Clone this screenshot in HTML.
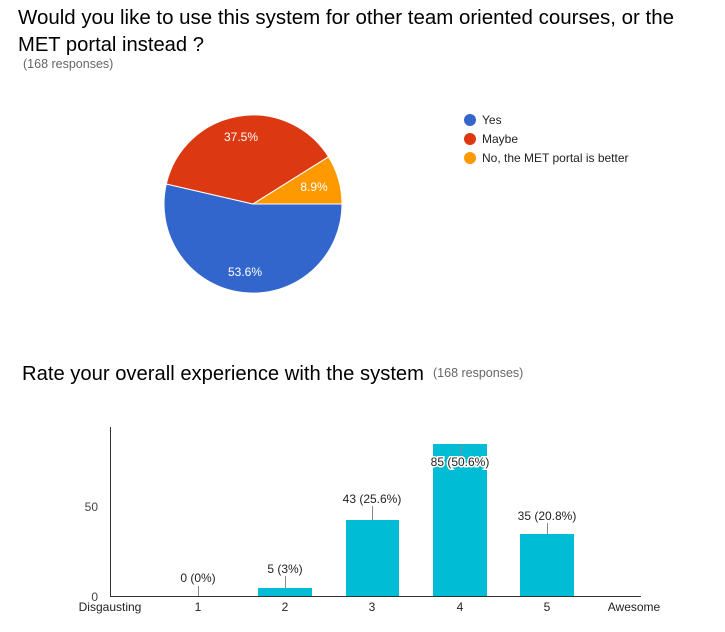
<!DOCTYPE html>
<html><head><meta charset="utf-8">
<style>
html,body{margin:0;padding:0;background:#fff;width:725px;height:632px;overflow:hidden}
svg{display:block;font-family:"Liberation Sans",Arial,sans-serif}
</style></head><body>
<svg width="725" height="632" viewBox="0 0 725 632" xmlns="http://www.w3.org/2000/svg">
<g font-size="20" fill="#000" style="font-stretch:condensed">
<text x="18" y="24" textLength="656" lengthAdjust="spacingAndGlyphs">Would you like to use this system for other team oriented courses, or the</text>
<text x="18" y="51" textLength="186" lengthAdjust="spacingAndGlyphs">MET portal instead ?</text>
</g>
<text x="23" y="68" font-size="12.5" fill="#666">(168 responses)</text>

<!-- pie -->
<path d="M253,204 L342,204 A89,89 0 1 1 166.3,184 Z" fill="#3366cc" stroke="#fff" stroke-width="1"/>
<path d="M253,204 L166.3,184 A89,89 0 0 1 328.5,156.8 Z" fill="#dc3912" stroke="#fff" stroke-width="1"/>
<path d="M253,204 L328.5,156.8 A89,89 0 0 1 342,204 Z" fill="#ff9900" stroke="#fff" stroke-width="1"/>
<g font-size="12" fill="#fff" text-anchor="middle">
<text x="241" y="141">37.5%</text>
<text x="314" y="191">8.9%</text>
<text x="245" y="276">53.6%</text>
</g>
<g font-size="12" fill="#222">
<circle cx="470" cy="120" r="6" fill="#3366cc"/><text x="482" y="124">Yes</text>
<circle cx="470" cy="139" r="6" fill="#dc3912"/><text x="482" y="143">Maybe</text>
<circle cx="470" cy="158" r="6" fill="#ff9900"/><text x="482" y="162">No, the MET portal is better</text>
</g>

<text x="22" y="380" font-size="20" fill="#000" textLength="402" lengthAdjust="spacingAndGlyphs">Rate your overall experience with the system</text>
<text x="433" y="377" font-size="12.5" fill="#666">(168 responses)</text>

<!-- bar chart -->
<g fill="#00bcd4">
<rect x="258" y="588" width="54" height="8"/>
<rect x="346" y="520" width="53" height="76"/>
<rect x="433" y="444" width="54" height="152"/>
<rect x="520" y="534" width="54" height="62"/>
</g>
<g stroke="#888" stroke-width="1">
<line x1="198.5" y1="586" x2="198.5" y2="596"/>
<line x1="285.5" y1="576" x2="285.5" y2="588"/>
<line x1="372.5" y1="506" x2="372.5" y2="520"/>
<line x1="460.5" y1="444" x2="460.5" y2="456"/>
<line x1="547.5" y1="523" x2="547.5" y2="534"/>
</g>
<line x1="110.5" y1="427" x2="110.5" y2="597" stroke="#333" stroke-width="1"/>
<line x1="110" y1="596.5" x2="641" y2="596.5" stroke="#333" stroke-width="1"/>
<g font-size="12" fill="#222" text-anchor="middle">
<text x="198" y="582">0 (0%)</text>
<text x="285" y="573">5 (3%)</text>
<text x="372" y="503">43 (25.6%)</text>
<text x="460" y="466" stroke="#fff" stroke-width="3" paint-order="stroke">85 (50.6%)</text>
<text x="547" y="520">35 (20.8%)</text>
<text x="110" y="611">Disgausting</text>
<text x="198" y="611">1</text>
<text x="285" y="611">2</text>
<text x="372" y="611">3</text>
<text x="460" y="611">4</text>
<text x="547" y="611">5</text>
<text x="634" y="611">Awesome</text>
</g>
<g font-size="12" fill="#444" text-anchor="end">
<text x="98" y="511">50</text>
<text x="98" y="601">0</text>
</g>
</svg>
</body></html>
